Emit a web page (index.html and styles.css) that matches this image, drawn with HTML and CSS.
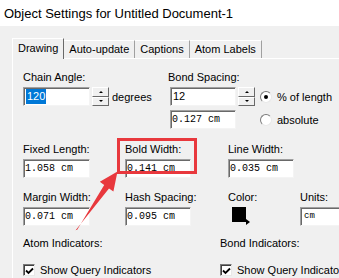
FILE: index.html
```html
<!DOCTYPE html>
<html lang="en">
<head>
  <meta charset="UTF-8"/>
  <title>Object Settings</title>
  <link rel="stylesheet" href="styles.css">
</head>
<body>
  <div class="window">
    <div class="titlebar">Object Settings for Untitled Document-1</div>

    <div class="tabs">
      <div class="tab active">Drawing</div>
      <div class="tab">Auto-update</div>
      <div class="tab">Captions</div>
      <div class="tab">Atom Labels</div>
    </div>

    <div class="panel">
      <div class="row-top">
        <div class="field chain">
          <div class="label">Chain Angle:</div>
          <div class="line">
            <div class="input prop"><span class="selected">120</span></div>
            <div class="spin"><span class="up"></span><span class="down"></span></div>
            <div class="unit">degrees</div>
          </div>
        </div>
        <div class="field">
          <div class="label">Bond Spacing:</div>
          <div class="spacing">
            <div class="input prop short">12</div>
            <div class="spin"><span class="up"></span><span class="down"></span></div>
            <label class="radio"><span class="dot checked"></span>% of length</label>
            <div class="input short">0.127 cm</div>
            <div></div>
            <label class="radio"><span class="dot"></span>absolute</label>
          </div>
        </div>
      </div>

      <div class="grid">
        <div class="field">
          <div class="label">Fixed Length:</div>
          <div class="input">1.058 cm</div>
        </div>
        <div class="field">
          <div class="label">Bold Width:</div>
          <div class="input short">0.141 cm</div>
        </div>
        <div class="field">
          <div class="label">Line Width:</div>
          <div class="input short">0.035 cm</div>
        </div>
        <div></div>

        <div class="field">
          <div class="label">Margin Width:</div>
          <div class="input">0.071 cm</div>
        </div>
        <div class="field">
          <div class="label">Hash Spacing:</div>
          <div class="input short">0.095 cm</div>
        </div>
        <div class="field">
          <div class="label">Color:</div>
          <div class="swatch"></div>
        </div>
        <div class="field">
          <div class="label">Units:</div>
          <div class="input units">cm</div>
        </div>
      </div>

      <div class="indicators">
        <div class="group">
          <div class="label">Atom Indicators:</div>
          <label class="check"><span class="box"><svg width="9" height="8" viewBox="0 0 9 8"><path d="M1 3.5 L3.5 6 L8 1.5" fill="none" stroke="#000" stroke-width="1.8"/></svg></span>Show Query Indicators</label>
        </div>
        <div class="group">
          <div class="label">Bond Indicators:</div>
          <label class="check"><span class="box"><svg width="9" height="8" viewBox="0 0 9 8"><path d="M1 3.5 L3.5 6 L8 1.5" fill="none" stroke="#000" stroke-width="1.8"/></svg></span>Show Query Indicators</label>
        </div>
      </div>
    </div>

    <!-- annotation drawn over the dialog -->
    <div class="highlight"></div>
    <svg class="arrow" width="339" height="278" viewBox="0 0 339 278">
      <polygon points="75.6,230.3 109,188.4 113.4,191.6 117.5,171.5 99.8,181.8 104.2,185 77.2,229.7" fill="#e8383d"/>
    </svg>
  </div>
</body>
</html>
```

FILE: styles.css
```css
* {
  margin: 0;
  padding: 0;
  box-sizing: border-box;
}

body {
  width: 339px;
  height: 278px;
  overflow: hidden;
  background: #f0f0f0;
  font-family: "Liberation Sans", Arial, sans-serif;
  font-size: 11px;
  color: #000;
}

.window {
  position: relative;
  height: 100%;
  overflow: hidden;
}

.titlebar {
  height: 26px;
  background: #fff;
  padding-left: 4px;
  font-size: 13px;
  line-height: 28px;
  white-space: nowrap;
}

.tabs {
  display: flex;
  align-items: flex-end;
  height: 20px;
  margin: 12px 0 0 12px;
}

.tab {
  height: 18px;
  line-height: 16px;
  padding: 0 5px;
  border-top: 1px solid #fff;
  border-right: 1px solid #a0a0a0;
  white-space: nowrap;
}

.tab.active {
  position: relative;
  z-index: 1;
  height: 21px;
  margin-bottom: -1px;
  line-height: 18px;
  border-left: 1px solid #fff;
  border-right: 1px solid #696969;
  background: #f0f0f0;
}

.panel {
  margin-left: 12px;
  height: 240px;
  border-left: 1px solid #fff;
  border-top: 1px solid #fff;
  padding: 11px 0 0 10px;
  overflow: hidden;
}

.label {
  line-height: 14px;
  margin-bottom: 3px;
  white-space: nowrap;
}

.row-top {
  display: flex;
}

.chain {
  width: 145px;
  flex-shrink: 0;
}

.line {
  display: flex;
  align-items: center;
}

.input {
  width: 67px;
  height: 19px;
  background: #fff;
  border: 1px solid;
  border-color: #a0a0a0 #f4f4f4 #f4f4f4 #a0a0a0;
  box-shadow: inset 1px 1px #696969;
  padding-left: 1px;
  font-family: "Liberation Mono", "Courier New", monospace;
  font-size: 10px;
  line-height: 17px;
  white-space: nowrap;
  overflow: hidden;
}

.input.short {
  width: 66px;
}

.input.prop {
  font-family: "Liberation Sans", Arial, sans-serif;
  font-size: 11px;
  padding-left: 2px;
}

.input.units {
  width: 60px;
  padding-left: 3px;
  font-size: 9px;
}

.selected {
  display: inline-block;
  background: #0078d7;
  color: #fff;
  line-height: 15px;
  padding: 0 1px;
  margin-top: 1px;
  vertical-align: top;
}

.spin {
  display: flex;
  flex-direction: column;
  width: 17px;
  height: 19px;
  margin-left: 2px;
}

.spin span {
  flex: 1;
  display: flex;
  align-items: center;
  justify-content: center;
  border: 1px solid;
  border-color: #fff #696969 #696969 #fff;
  background: #f0f0f0;
}

.spin span::before {
  content: '';
  border-left: 2px solid transparent;
  border-right: 2px solid transparent;
}

.spin .up::before {
  border-bottom: 2px solid #000;
}

.spin .down::before {
  border-top: 2px solid #000;
}

.unit {
  margin-left: 3px;
}

.spacing {
  display: grid;
  grid-template-columns: 68px 22px auto;
  row-gap: 4px;
  align-items: center;
  margin-left: 2px;
}

.spacing .spin {
  margin-left: 0;
}

.radio {
  display: flex;
  align-items: center;
  gap: 5px;
  white-space: nowrap;
}

.dot {
  width: 12px;
  height: 12px;
  border-radius: 50%;
  border: 1px solid;
  border-color: #7a7a7a #e8e8e8 #e8e8e8 #7a7a7a;
  background: #fff;
  display: flex;
  align-items: center;
  justify-content: center;
}

.dot.checked::before {
  content: '';
  width: 4px;
  height: 4px;
  border-radius: 50%;
  background: #000;
}

.grid {
  display: grid;
  grid-template-columns: 102px 103px 72px 1fr;
  row-gap: 12px;
  margin-top: 13px;
}

.swatch {
  position: relative;
  width: 14px;
  height: 15px;
  margin: 1px 0 0 4px;
  background: #000;
}

.swatch::after {
  content: '';
  position: absolute;
  left: 14px;
  bottom: -3px;
  border-top: 3px solid transparent;
  border-bottom: 3px solid transparent;
  border-left: 4px solid #000;
}

.indicators {
  display: flex;
  margin-top: 10px;
}

.group {
  width: 197px;
  flex-shrink: 0;
}

.group .label {
  margin-bottom: 14px;
}

.check {
  display: flex;
  align-items: center;
  gap: 5px;
  white-space: nowrap;
}

.box {
  width: 12px;
  height: 12px;
  background: #fff;
  border: 1px solid;
  border-color: #7a7a7a #e8e8e8 #e8e8e8 #7a7a7a;
  box-shadow: inset 1px 1px #404040;
  display: flex;
  align-items: center;
  justify-content: center;
  padding: 1px 0 0 1px;
}

.highlight {
  position: absolute;
  left: 117px;
  top: 138px;
  width: 80px;
  height: 36px;
  border: 3px solid #e8383d;
}

.arrow {
  position: absolute;
  left: 0;
  top: 0;
}
```
